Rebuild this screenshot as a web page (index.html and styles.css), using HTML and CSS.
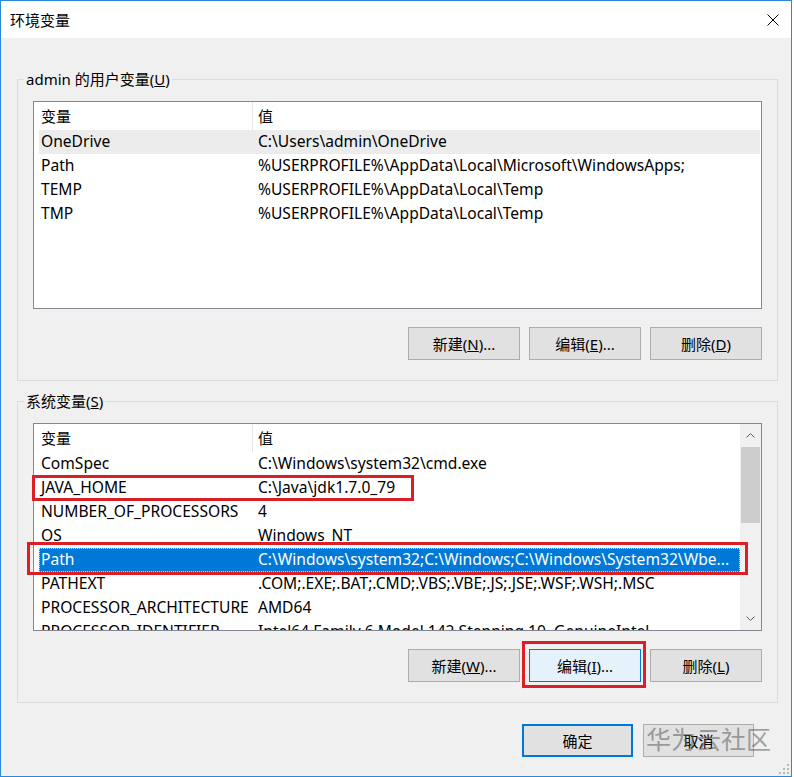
FILE: index.html
```html
<!DOCTYPE html>
<html lang="zh-CN">
<head>
<meta charset="utf-8">
<title>环境变量</title>
<link rel="stylesheet" href="styles.css">
</head>
<body>
<div class="window">
  <div class="titlebar">
    <span class="title">环境变量</span>
    <svg class="close" width="12" height="12" viewBox="0 0 12 12"><path d="M0.5 0.5 L11.5 11.5 M11.5 0.5 L0.5 11.5" stroke="#000" stroke-width="1" fill="none"/></svg>
  </div>
  <div class="content">
    <fieldset class="group">
      <legend>admin 的用户变量(<u>U</u>)</legend>
      <div class="list">
        <div class="rows">
          <div class="head"><div class="c1">变量</div><div class="c2">值</div></div>
          <div class="row hover"><div class="c1">OneDrive</div><div class="c2">C:\Users\admin\OneDrive</div></div>
          <div class="row"><div class="c1">Path</div><div class="c2">%USERPROFILE%\AppData\Local\Microsoft\WindowsApps;</div></div>
          <div class="row"><div class="c1">TEMP</div><div class="c2">%USERPROFILE%\AppData\Local\Temp</div></div>
          <div class="row"><div class="c1">TMP</div><div class="c2">%USERPROFILE%\AppData\Local\Temp</div></div>
        </div>
      </div>
      <div class="btns">
        <button class="btn">新建(<u>N</u>)...</button>
        <button class="btn">编辑(<u>E</u>)...</button>
        <button class="btn">删除(<u>D</u>)</button>
      </div>
    </fieldset>

    <fieldset class="group second">
      <legend>系统变量(<u>S</u>)</legend>
      <div class="list">
        <div class="rows scrolled">
          <div class="head"><div class="c1">变量</div><div class="c2">值</div></div>
          <div class="row"><div class="c1">ComSpec</div><div class="c2">C:\Windows\system32\cmd.exe</div></div>
          <div class="row"><div class="c1">JAVA_HOME</div><div class="c2">C:\Java\jdk1.7.0_79</div></div>
          <div class="row"><div class="c1">NUMBER_OF_PROCESSORS</div><div class="c2">4</div></div>
          <div class="row"><div class="c1">OS</div><div class="c2">Windows_NT</div></div>
          <div class="row selected"><div class="c1">Path</div><div class="c2">C:\Windows\system32;C:\Windows;C:\Windows\System32\Wbe...</div></div>
          <div class="row"><div class="c1">PATHEXT</div><div class="c2">.COM;.EXE;.BAT;.CMD;.VBS;.VBE;.JS;.JSE;.WSF;.WSH;.MSC</div></div>
          <div class="row"><div class="c1">PROCESSOR_ARCHITECTURE</div><div class="c2">AMD64</div></div>
          <div class="row"><div class="c1">PROCESSOR_IDENTIFIER</div><div class="c2">Intel64 Family 6 Model 142 Stepping 10, GenuineIntel</div></div>
        </div>
        <div class="vscroll">
          <div class="arrow"><svg width="9" height="5" viewBox="0 0 9 5"><path d="M0.5 4.5 L4.5 0.5 L8.5 4.5" stroke="#606060" fill="none"/></svg></div>
          <div class="track"><div class="thumb"></div></div>
          <div class="arrow"><svg width="9" height="5" viewBox="0 0 9 5"><path d="M0.5 0.5 L4.5 4.5 L8.5 0.5" stroke="#606060" fill="none"/></svg></div>
        </div>
      </div>
      <div class="btns">
        <button class="btn">新建(<u>W</u>)...</button>
        <button class="btn hot">编辑(<u>I</u>)...</button>
        <button class="btn">删除(<u>L</u>)</button>
      </div>
    </fieldset>

    <div class="footer">
      <button class="btn wide default">确定</button>
      <button class="btn wide">取消</button>
    </div>
  </div>

  <div class="mark mark-java"></div>
  <div class="mark mark-path"></div>
  <div class="mark mark-edit"></div>
  <div class="watermark">华为云社区</div>
  <svg class="grip" width="10" height="10" viewBox="0 0 10 10">
    <rect x="8" y="0" width="2" height="2" fill="#b8b8b8"/>
    <rect x="4" y="4" width="2" height="2" fill="#b8b8b8"/>
    <rect x="8" y="4" width="2" height="2" fill="#b8b8b8"/>
    <rect x="0" y="8" width="2" height="2" fill="#b8b8b8"/>
    <rect x="4" y="8" width="2" height="2" fill="#b8b8b8"/>
    <rect x="8" y="8" width="2" height="2" fill="#b8b8b8"/>
  </svg>
</div>
</body>
</html>
```
FILE: styles.css
```css
html, body {
  margin: 0;
  padding: 0;
  background: #ffffff;
}

.window {
  position: relative;
  width: 792px;
  height: 777px;
  box-sizing: border-box;
  border: 1px solid #2b88d8;
  background: #f0f0f0;
  font-family: "Noto Sans", "Noto Sans CJK SC", sans-serif;
  font-size: 15px;
  color: #000;
  overflow: hidden;
}

.titlebar {
  height: 37px;
  background: #ffffff;
  display: flex;
  align-items: center;
  justify-content: space-between;
  padding: 0 12px 0 9px;
}

.title {
  line-height: 20px;
}

.close {
  display: block;
}

.content {
  padding: 31px 13px 0 16px;
}

.group {
  margin: 0;
  width: 761px;
  box-sizing: border-box;
  min-width: 0;
  padding: 12px 15px 20px 15px;
  border: 1px solid #dcdcdc;
}

.group.second {
  margin-top: 10px;
}

.group legend {
  padding: 0 2px;
  margin-left: -9px;
  line-height: 20px;
}

.list {
  height: 208px;
  box-sizing: border-box;
  border: 1px solid #828790;
  background: #ffffff;
  display: flex;
  overflow: hidden;
}

.rows {
  flex: 1;
  min-width: 0;
  overflow: hidden;
  padding: 0 1px 0 5px;
}

.rows.scrolled {
  padding-right: 0;
}

.head {
  display: flex;
  height: 28px;
  line-height: 28px;
}

.head .c1 {
  border-right: 1px solid #e5e5e5;
}

.row {
  display: flex;
  height: 24px;
  line-height: 23px;
  font-size: 15.6px;
}

.c1 {
  width: 214px;
  flex: none;
  box-sizing: border-box;
  padding-left: 2px;
  white-space: nowrap;
  overflow: hidden;
}

.c2 {
  flex: 1;
  min-width: 0;
  padding-left: 5px;
  white-space: nowrap;
  overflow: hidden;
}

.row.hover {
  background: #ececec;
}

.row.selected {
  background: #0078d7;
  color: #ffffff;
  outline: 1px dotted rgba(255, 255, 255, 0.75);
  outline-offset: -1px;
}

.vscroll {
  width: 21px;
  flex: none;
  background: #f0f0f0;
  display: flex;
  flex-direction: column;
}

.arrow {
  height: 23px;
  display: flex;
  align-items: center;
  justify-content: center;
}

.arrow svg {
  display: block;
}

.track {
  flex: 1;
}

.thumb {
  height: 76px;
  margin: 0 1px;
  background: #cdcdcd;
}

.btns {
  display: flex;
  justify-content: flex-end;
  gap: 9px;
  margin-top: 18px;
}

.btn {
  width: 112px;
  height: 33px;
  box-sizing: border-box;
  margin: 0;
  padding: 0;
  border: 1px solid #adadad;
  background: #e1e1e1;
  font: inherit;
  color: #000;
  display: flex;
  align-items: center;
  justify-content: center;
  line-height: 20px;
}

.btn.hot {
  background: #e5f1fb;
  border-color: #0078d7;
}

.btn.wide {
  width: 111px;
}

.btn.default {
  border: 2px solid #0078d7;
}

.footer {
  display: flex;
  justify-content: flex-end;
  gap: 10px;
  margin-top: 21px;
  padding-right: 24px;
}

.mark {
  position: absolute;
  box-sizing: border-box;
  border: 3px solid #dc1f26;
}

.mark-java {
  left: 31px;
  top: 474px;
  width: 382px;
  height: 26px;
}

.mark-path {
  left: 26px;
  top: 541px;
  width: 721px;
  height: 33px;
}

.mark-edit {
  left: 521px;
  top: 640px;
  width: 124px;
  height: 47px;
}

.watermark {
  position: absolute;
  left: 645px;
  top: 722px;
  font-family: "Noto Sans CJK SC", sans-serif;
  font-size: 25px;
  line-height: 30px;
  color: rgba(80, 80, 80, 0.5);
  white-space: nowrap;
}

.grip {
  position: absolute;
  right: 2px;
  bottom: 2px;
  display: block;
}
```
